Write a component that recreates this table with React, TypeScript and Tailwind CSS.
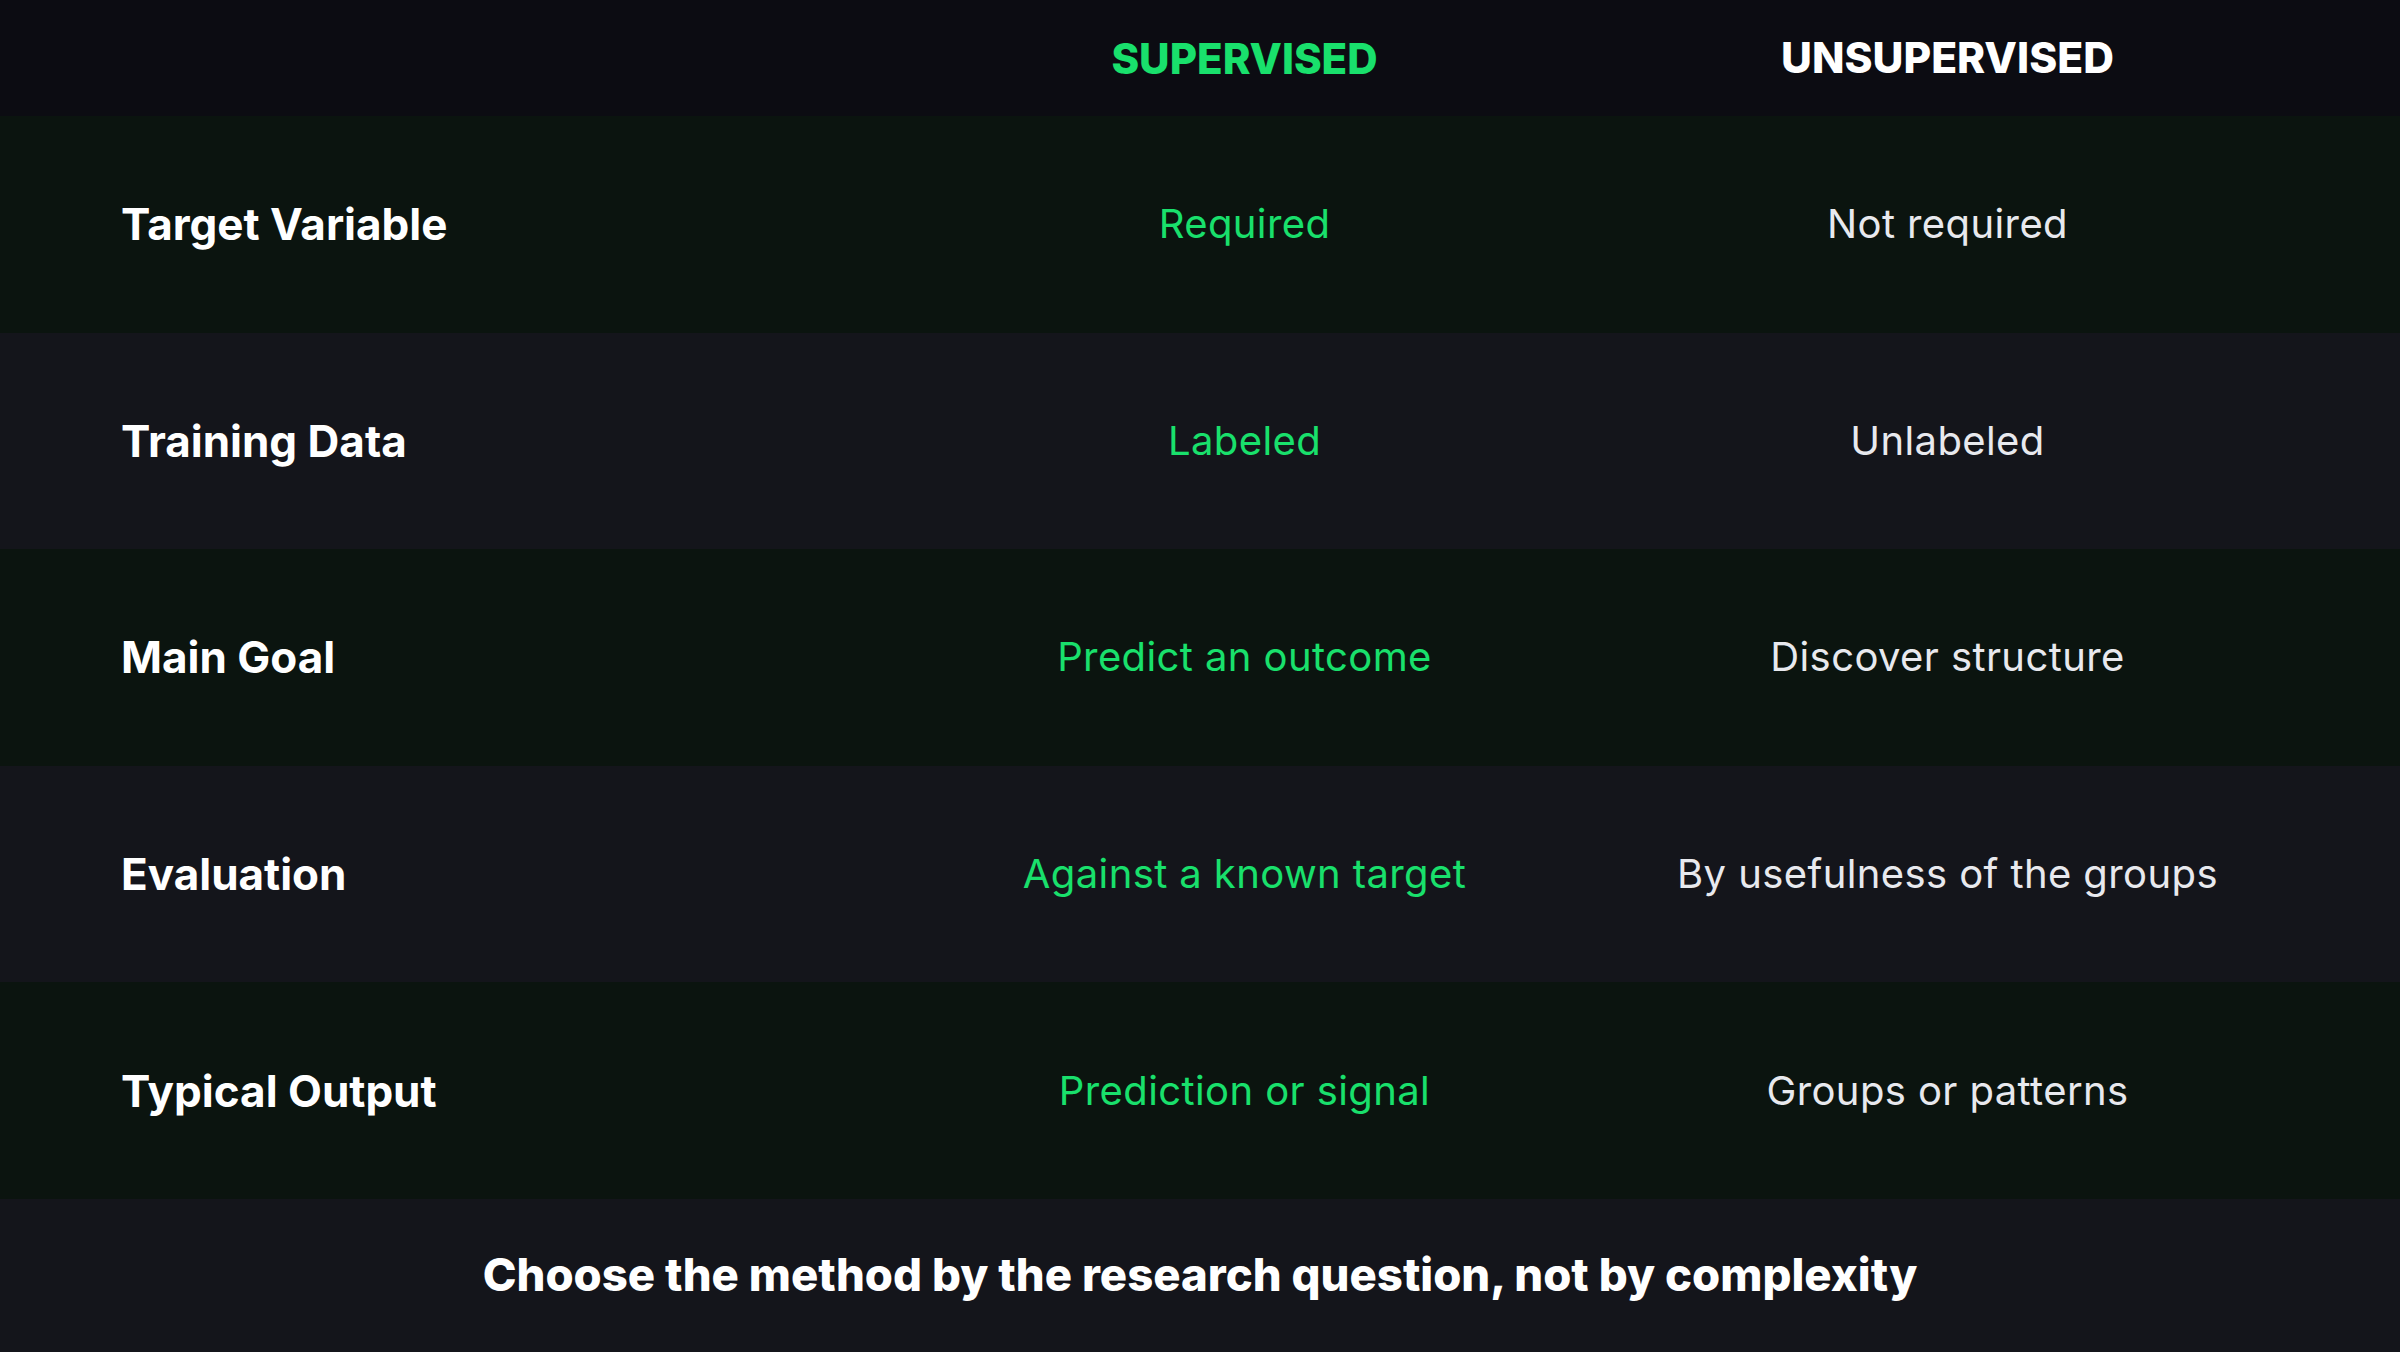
const rows = [
  { label: 'Target Variable', sup: 'Required', unsup: 'Not required' },
  { label: 'Training Data', sup: 'Labeled', unsup: 'Unlabeled' },
  { label: 'Main Goal', sup: 'Predict an outcome', unsup: 'Discover structure' },
  { label: 'Evaluation', sup: 'Against a known target', unsup: 'By usefulness of the groups' },
  { label: 'Typical Output', sup: 'Prediction or signal', unsup: 'Groups or patterns' },
];

export default function App() {
  return (
    <div className="flex h-[1352px] w-full flex-col bg-[#14151b] font-['Inter','Noto_Sans',sans-serif] text-white">
      {/* Column headers */}
      <div className="grid h-[116px] grid-cols-[772px_703px_703px] items-center bg-[#0c0c12] pl-[121px] pr-[101px]">
        <div />
        <div className="text-center text-[42px] font-extrabold text-[#19e06c]">SUPERVISED</div>
        <div className="text-center text-[42.5px] font-extrabold text-white">UNSUPERVISED</div>
      </div>

      {rows.map((row, i) => (
        <div
          key={row.label}
          className={
            'grid flex-1 grid-cols-[772px_703px_703px] items-center pl-[121px] pr-[101px] ' +
            (i % 2 === 0 ? 'bg-[#0b140f]' : 'bg-[#14151b]')
          }
        >
          <div className="text-[44px] font-bold text-white">{row.label}</div>
          <div className="text-center text-[40px] tracking-[0.01em] text-[#19e06c]">{row.sup}</div>
          <div className="text-center text-[40px] tracking-[0.01em] text-[#e8e9ee]">{row.unsup}</div>
        </div>
      ))}

      <div className="flex h-[153px] items-center justify-center bg-[#14151b]">
        <p className="text-[45.5px] font-extrabold text-white">
          Choose the method by the research question, not by complexity
        </p>
      </div>
    </div>
  );
}
